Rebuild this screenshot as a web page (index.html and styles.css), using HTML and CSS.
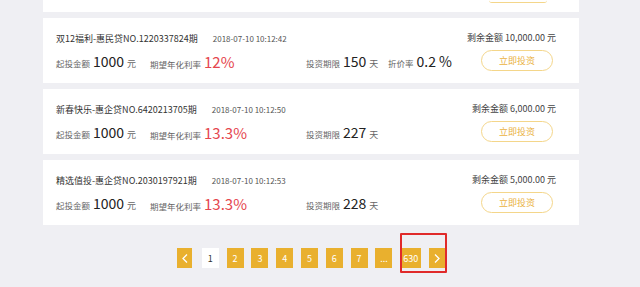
FILE: index.html
```html
<!DOCTYPE html>
<html>
<head>
  <meta charset="UTF-8">
  <title>投资列表</title>
  <meta name="viewport" content="width=device-width, initial-scale=1.0">
  <link rel="stylesheet" href="styles.css">
</head>
<body>
  <div class="list">
    <div class="card stub">
      <div class="btn-edge"></div>
    </div>
    <div class="card">
      <div class="info">
        <div class="head"><span class="name">双12福利-惠民贷NO.1220337824期</span><span class="date">2018-07-10 10:12:42</span></div>
        <div class="terms">
          <div class="term"><span class="label">起投金额</span><span class="num">1000</span><span class="unit">元</span></div>
          <div class="term"><span class="label">期望年化利率</span><span class="num red">12%</span></div>
          <div class="term"><span class="label">投资期限</span><span class="num">150</span><span class="unit">天</span></div>
          <div class="term"><span class="label">折价率</span><span class="num">0.2 %</span></div>
        </div>
      </div>
      <div class="side">
        <div class="left">剩余金额 10,000.00 元</div>
        <button class="btn">立即投资</button>
      </div>
    </div>
    <div class="card">
      <div class="info">
        <div class="head"><span class="name">新春快乐-惠企贷NO.6420213705期</span><span class="date">2018-07-10 10:12:50</span></div>
        <div class="terms">
          <div class="term"><span class="label">起投金额</span><span class="num">1000</span><span class="unit">元</span></div>
          <div class="term"><span class="label">期望年化利率</span><span class="num red">13.3%</span></div>
          <div class="term"><span class="label">投资期限</span><span class="num">227</span><span class="unit">天</span></div>
        </div>
      </div>
      <div class="side">
        <div class="left">剩余金额 6,000.00 元</div>
        <button class="btn">立即投资</button>
      </div>
    </div>
    <div class="card">
      <div class="info">
        <div class="head"><span class="name">精选值投-惠企贷NO.2030197921期</span><span class="date">2018-07-10 10:12:53</span></div>
        <div class="terms">
          <div class="term"><span class="label">起投金额</span><span class="num">1000</span><span class="unit">元</span></div>
          <div class="term"><span class="label">期望年化利率</span><span class="num red">13.3%</span></div>
          <div class="term"><span class="label">投资期限</span><span class="num">228</span><span class="unit">天</span></div>
        </div>
      </div>
      <div class="side">
        <div class="left">剩余金额 5,000.00 元</div>
        <button class="btn">立即投资</button>
      </div>
    </div>
  </div>
  <div class="pager">
    <a class="page arrow">
      <svg width="6" height="9" viewBox="0 0 6 9"><path d="M5 0.5L1 4.5L5 8.5" fill="none" stroke="#fff" stroke-width="1.3"/></svg>
    </a>
    <a class="page current">1</a>
    <a class="page">2</a>
    <a class="page">3</a>
    <a class="page">4</a>
    <a class="page">5</a>
    <a class="page">6</a>
    <a class="page">7</a>
    <a class="page">...</a>
    <a class="page last">630<span class="mark"></span></a>
    <a class="page arrow next">
      <svg width="6" height="9" viewBox="0 0 6 9"><path d="M1 0.5L5 4.5L1 8.5" fill="none" stroke="#fff" stroke-width="1.3"/></svg>
    </a>
  </div>
</body>
</html>
```

FILE: styles.css
```css
body {
  margin: 0;
  background-color: #efeff3;
  font-family: "Noto Sans CJK SC", "Noto Sans", sans-serif;
  color: #333;
  height: 287px;
  overflow: hidden;
}
.list {
  width: 536px;
  margin-left: 43px;
}
.card {
  display: flex;
  justify-content: space-between;
  box-sizing: border-box;
  height: 65px;
  padding: 13px 23px 0 13px;
  margin-bottom: 6px;
  background-color: #fff;
}
.card.stub {
  height: 12px;
  padding: 0 26px 0 0;
  justify-content: flex-end;
  align-items: flex-start;
}
.btn-edge {
  width: 58px;
  height: 2px;
  margin-right: 6px;
  border-bottom: 1px solid #f4d68a;
  border-radius: 0 0 30px 30px;
}
.head {
  display: flex;
  align-items: center;
  height: 14px;
}
.name {
  font-size: 9px;
  color: #333;
}
.date {
  margin-left: 15px;
  font-size: 8px;
  color: #555;
}
.terms {
  display: grid;
  grid-template-columns: 94px 156px 82px auto;
  align-items: center;
  height: 22px;
  margin-top: 5px;
}
.term {
  display: flex;
  align-items: baseline;
  white-space: nowrap;
}
.label {
  font-size: 8.5px;
  color: #666;
  margin-right: 3px;
}
.num {
  font-size: 14px;
  color: #222;
}
.num.red {
  font-size: 15px;
  color: #e5464e;
}
.unit {
  font-size: 9px;
  color: #666;
  margin-left: 3px;
}
.side {
  display: flex;
  flex-direction: column;
  align-items: flex-end;
}
.left {
  height: 14px;
  line-height: 14px;
  font-size: 9px;
  color: #444;
  white-space: nowrap;
}
.btn {
  width: 72px;
  height: 21px;
  margin: 5px 3px 0 0;
  padding: 0;
  border: 1px solid #f4d68a;
  border-radius: 11px;
  background: #fff;
  color: #eab23f;
  font-family: inherit;
  font-size: 9px;
}
.pager {
  display: flex;
  justify-content: center;
  gap: 7.8px;
  width: 536px;
  margin: 23px 0 0 43px;
}
.page {
  position: relative;
  display: flex;
  align-items: center;
  justify-content: center;
  width: 17px;
  height: 20px;
  background-color: #e9b02e;
  color: #fff;
  font-size: 9px;
}
.page.current {
  background-color: #fff;
  color: #333;
}
.page.arrow {
  width: 15px;
  margin-right: 2px;
}
.page.next {
  margin-right: 0;
  width: 16px;
}
.page.last {
  width: 21px;
}
.mark {
  position: absolute;
  left: 0;
  top: -15px;
  width: 43px;
  height: 36px;
  border: 2px solid #e02a2a;
  border-radius: 1px;
}
```
